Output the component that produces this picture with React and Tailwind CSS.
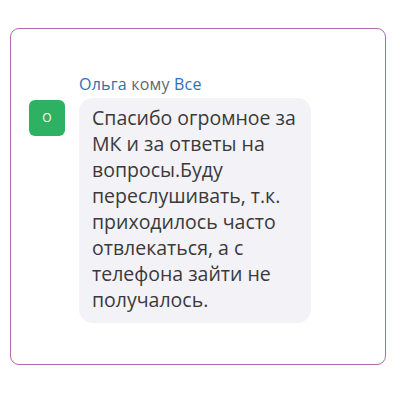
export default function App() {
  return (
    <div className="w-[400px] h-[400px] bg-white pt-[28px] pl-[10px]" style={{ fontFamily: '"Open Sans", "Noto Sans", sans-serif' }}>
      <div className="w-[376px] h-[337px] border border-[#b06aa8] rounded-[9px] pt-[44px] pl-[18px]">
        <div className="flex flex-col">
          <div className="ml-[50px] text-[16px] leading-[22px] tracking-[0.2px] text-[#666]">
            <span className="text-[#2f6fb2]">Ольга</span> кому <span className="text-[#2f6fb2]">Все</span>
          </div>
          <div className="flex gap-[14px] mt-[3px]">
            <div className="w-[36px] h-[36px] mt-[2px] rounded-[6px] bg-[#2fb163] flex items-center justify-center text-white text-[12px] shrink-0">
              О
            </div>
            <div className="w-[232px] bg-[#f2f2f7] rounded-[14px] pl-[13px] pr-[6px] pt-[7px] pb-[10px] text-[19.5px] leading-[26px] text-[#3a3a3a]">
              Спасибо огромное за МК и за ответы на вопросы.Буду переслушивать, т.к. приходилось часто отвлекаться, а с телефона зайти не получалось.
            </div>
          </div>
        </div>
      </div>
    </div>
  );
}
